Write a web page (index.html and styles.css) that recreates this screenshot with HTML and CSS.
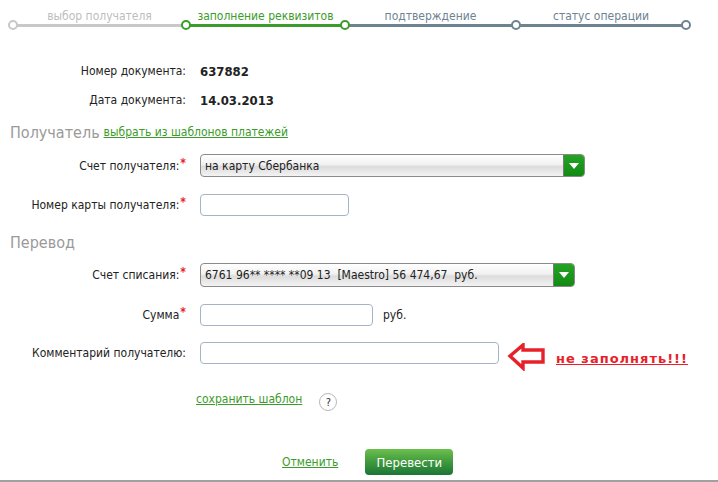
FILE: index.html
```html
<!DOCTYPE html>
<html lang="ru">
<head>
<meta charset="utf-8">
<link rel="stylesheet" href="styles.css">
</head>
<body>
<div class="page">
  <div class="steps">
    <div class="step done"><span class="step-label">выбор получателя</span></div>
    <div class="step current"><span class="step-label">заполнение реквизитов</span></div>
    <div class="step todo"><span class="step-label">подтверждение</span></div>
    <div class="step todo last"><span class="step-label">статус операции</span></div>
  </div>

  <div class="form">
    <div class="row r-doc">
      <div class="label">Номер документа:</div>
      <div class="value bold">637882</div>
    </div>
    <div class="row r-date">
      <div class="label">Дата документа:</div>
      <div class="value bold">14.03.2013</div>
    </div>
    <div class="section s-recipient">
      <span class="section-title">Получатель</span>
      <a class="link" href="#">выбрать из шаблонов платежей</a>
    </div>
    <div class="row r-sel1">
      <div class="label">Счет получателя:<span class="req">*</span></div>
      <div class="value">
        <div class="select w384"><span class="select-text">на карту Сбербанка</span><span class="select-btn"></span></div>
      </div>
    </div>
    <div class="row r-card">
      <div class="label">Номер карты получателя:<span class="req">*</span></div>
      <div class="value"><div class="input w148"></div></div>
    </div>
    <div class="section s-transfer">
      <span class="section-title">Перевод</span>
    </div>
    <div class="row r-sel2">
      <div class="label">Счет списания:<span class="req">*</span></div>
      <div class="value">
        <div class="select w374 tall"><span class="select-text">6761 96** **** **09 13&nbsp; [Maestro] 56 474,67&nbsp; руб.</span><span class="select-btn"></span></div>
      </div>
    </div>
    <div class="row r-sum">
      <div class="label">Сумма<span class="req">*</span></div>
      <div class="value"><div class="input w172"></div><span class="unit">руб.</span></div>
    </div>
    <div class="row r-comment">
      <div class="label">Комментарий получателю:</div>
      <div class="value">
        <div class="input w298"></div>
        <svg class="arrow" width="40" height="28" viewBox="0 0 40 28">
          <polygon points="3,13 16,2 16,7 36,7 36,19 16,19 16,25" fill="#fff" stroke="#e8202a" stroke-width="3.4" stroke-linejoin="miter"/>
        </svg>
        <span class="warn">не заполнять!!!</span>
      </div>
    </div>
    <div class="row r-save">
      <div class="label"></div>
      <div class="value">
        <a class="link save" href="#">сохранить шаблон</a>
        <span class="help">?</span>
      </div>
    </div>
    <div class="row r-actions">
      <div class="actions">
        <a class="link cancel" href="#">Отменить</a>
        <span class="btn">Перевести</span>
      </div>
    </div>
  </div>
</div>
</body>
</html>
```
FILE: styles.css
```css
html, body {
  margin: 0;
  padding: 0;
  background: #fff;
}
body {
  font-family: "DejaVu Sans Condensed", "DejaVu Sans", sans-serif;
  font-stretch: condensed;
  font-size: 12px;
  color: #222;
  overflow: hidden;
}
.page {
  width: 718px;
  height: 482px;
  box-sizing: border-box;
  border-bottom: 2px solid #a0a0a0;
}

/* steps */
.steps {
  display: flex;
  padding-left: 13px;
  height: 40px;
}
.step {
  position: relative;
  height: 27px;
  border-bottom: 3px solid #c8c8c8;
  display: flex;
  justify-content: center;
  align-items: flex-start;
  padding-top: 9px;
  box-sizing: border-box;
}
.step:nth-child(1) { width: 173px; }
.step:nth-child(2) { width: 159px; }
.step:nth-child(3) { width: 171px; }
.step:nth-child(4) { width: 170px; }
.step-label {
  font-size: 12px;
  line-height: 14px;
}
.step::before,
.step.last::after {
  content: "";
  position: absolute;
  left: -5px;
  bottom: -6px;
  width: 6px;
  height: 6px;
  border: 2px solid #c8c8c8;
  border-radius: 50%;
  background: #fff;
  z-index: 2;
}
.step.last::after {
  left: auto;
  right: -5px;
}
.step.done { border-color: #c8c8c8; }
.step.done .step-label { color: #bdbdbd; }
.step.current { border-color: #3b9c2b; }
.step.current .step-label { color: #3b9c2b; }
.step.current::before { border-color: #3b9c2b; }
.step.todo { border-color: #6e8391; }
.step.todo .step-label { color: #6e8391; }
.step.todo::before, .step.last::after { border-color: #6e8391; }
.step.todo:nth-child(3)::before { border-color: #3b9c2b; }

/* form */
.form {
  padding-top: 16px;
}
.row {
  display: flex;
  align-items: center;
}
.label {
  width: 186px;
  flex: none;
  text-align: right;
  color: #222;
  white-space: nowrap;
}
.value {
  margin-left: 14px;
  display: flex;
  align-items: center;
}
.bold { font-weight: bold; font-size: 13px; }
.req {
  color: #e8202a;
  font-weight: bold;
  position: relative;
  top: -3px;
  margin-left: 1px;
}
.r-doc { height: 30px; }
.r-date { height: 28px; }
.section {
  height: 36px;
  display: flex;
  align-items: center;
  padding-left: 10px;
}
.section-title {
  font-size: 16px;
  color: #9a9a9a;
  margin-right: 4px;
}
.s-transfer { height: 28px; }
.link {
  color: #3b9c2b;
  text-decoration: underline;
}
.r-sel1 { height: 31px; }
.r-card { height: 47px; }
.r-sel2 { height: 38px; }
.r-sum { height: 42px; }
.r-comment { height: 33px; }
.r-save { height: 62px; }
.r-actions {
  height: 49px;
  align-items: flex-start;
}

.select {
  display: flex;
  height: 23px;
  box-sizing: border-box;
  border: 1px solid #8a8a8a;
  border-radius: 4px;
  background: linear-gradient(#ffffff, #f1f1f1 45%, #dcdcdc 55%, #f3f3f3);
  overflow: hidden;
}
.select.tall { height: 24px; }
.w384 { width: 385px; }
.w374 { width: 375px; }
.select-text {
  flex: 1;
  padding-left: 4px;
  line-height: 23px;
  white-space: nowrap;
  color: #222;
}
.select-btn {
  width: 20px;
  flex: none;
  border-left: 1px solid #7a7a7a;
  background: linear-gradient(#25a325, #128a12);
  position: relative;
}
.select-btn::after {
  content: "";
  position: absolute;
  left: 5px;
  top: 8px;
  border-left: 5px solid transparent;
  border-right: 5px solid transparent;
  border-top: 6px solid #fff;
}
.input {
  height: 22px;
  box-sizing: border-box;
  border: 1px solid #a5b4c4;
  border-radius: 4px;
  background: #fff;
}
.w148 { width: 149px; }
.w172 { width: 173px; }
.w298 { width: 299px; }
.unit { margin-left: 10px; color: #222; }
.arrow {
  margin-left: 8px;
  margin-top: 8px;
  flex: none;
}
.warn {
  margin-left: 9px;
  margin-top: 12px;
  color: #e8202a;
  font-family: "DejaVu Sans", sans-serif;
  font-stretch: normal;
  font-weight: bold;
  font-size: 13px;
  letter-spacing: 1px;
  text-decoration: underline;
}
.save {
  margin-left: -4px;
  margin-top: -2px;
}
.help {
  margin-left: 17px;
  width: 18px;
  height: 18px;
  box-sizing: border-box;
  border: 1px solid #b8b8b8;
  border-radius: 50%;
  display: flex;
  align-items: center;
  justify-content: center;
  font-size: 11px;
  color: #333;
  margin-top: 4px;
}
.actions {
  display: flex;
  align-items: center;
  padding-left: 282px;
  padding-top: 18px;
}
.cancel { margin-right: 27px; }
.btn {
  width: 88px;
  height: 26px;
  border-radius: 4px;
  background: linear-gradient(#6cc04c, #3f9a3e 50%, #1c7536);
  color: #fff;
  font-size: 13px;
  display: flex;
  align-items: center;
  justify-content: center;
}
```
